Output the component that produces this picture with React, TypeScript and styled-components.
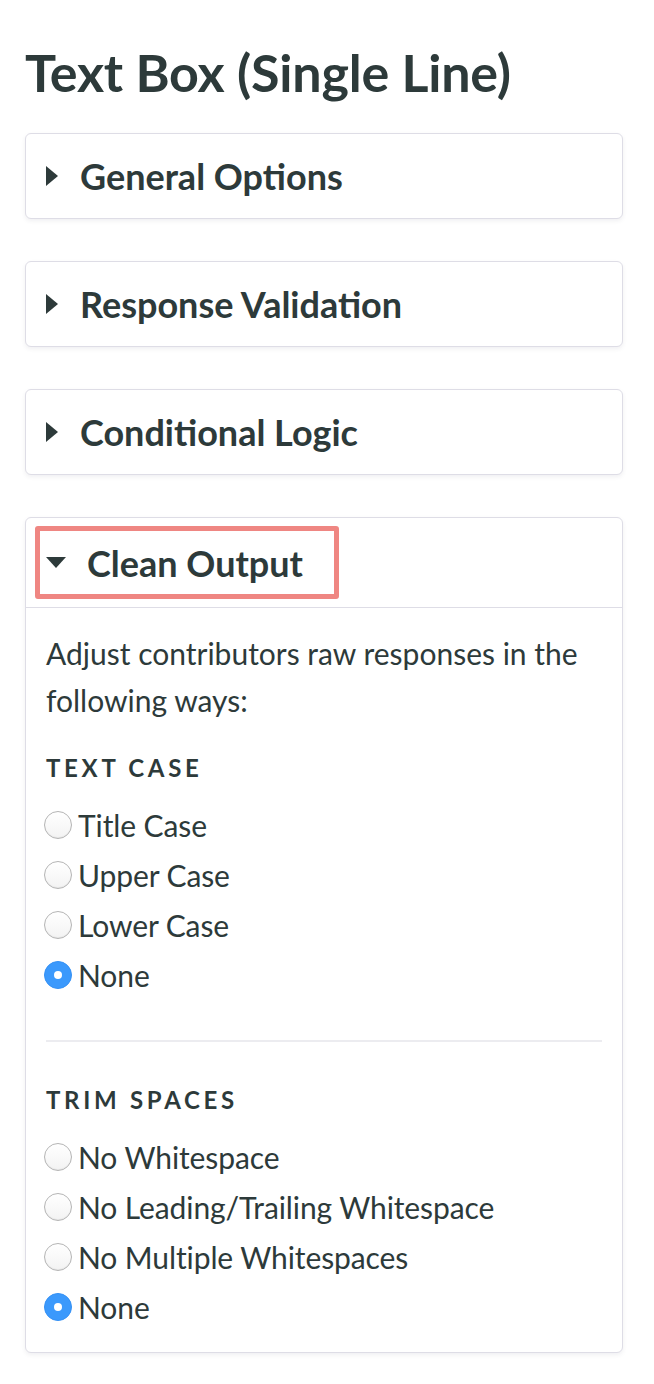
import styled, { createGlobalStyle } from 'styled-components';

const GlobalStyle = createGlobalStyle`
  html, body {
    margin: 0;
    padding: 0;
    background: #fff;
  }
  body {
    font-family: Lato, "Open Sans", sans-serif;
    color: #2d3a3a;
  }
`;

const Page = styled.div`
  padding: 32px 31px 30px 25px;
`;

const Title = styled.h1`
  margin: 0 0 21px 0;
  font-size: 52px;
  font-weight: 700;
  line-height: 80px;
  letter-spacing: -0.2px;
`;

const Stack = styled.div`
  display: flex;
  flex-direction: column;
  gap: 42px;
`;

const Card = styled.section`
  background: #fff;
  border: 1px solid #dedde6;
  border-radius: 6px;
  box-shadow: 0 2px 4px rgba(60, 60, 90, 0.08);
`;

const Header = styled.div<{ $open?: boolean }>`
  display: flex;
  align-items: center;
  box-sizing: content-box;
  height: ${(p) => (p.$open ? '73px' : '84px')};
  padding: ${(p) => (p.$open ? '8px 9px' : '0 10px')};
  border-bottom: ${(p) => (p.$open ? '1px solid #dedde6' : 'none')};
`;

const HeaderLabel = styled.div<{ $focus?: boolean }>`
  display: flex;
  align-items: center;
  gap: ${(p) => (p.$focus ? '21px' : '22px')};
  height: ${(p) => (p.$focus ? '73px' : '72px')};
  padding: 0 ${(p) => (p.$focus ? '31px' : '0')} 0 ${(p) => (p.$focus ? '6px' : '10px')};
  box-sizing: border-box;
  border: ${(p) => (p.$focus ? '5px solid #ef8682' : 'none')};
  border-radius: 3px;
  font-size: 36px;
  font-weight: 700;
`;

const Caret = styled.span<{ $open?: boolean }>`
  display: inline-block;
  width: 0;
  height: 0;
  ${(p) =>
    p.$open
      ? `border-left: 10px solid transparent;
         border-right: 10px solid transparent;
         border-top: 11px solid #2d3a3a;`
      : `border-top: 10px solid transparent;
         border-bottom: 10px solid transparent;
         border-left: 12px solid #2d3a3a;`}
`;

const Body = styled.div`
  padding: 22px 20px 20px 20px;
`;

const Intro = styled.p`
  margin: 0 0 29px 0;
  font-size: 30px;
  line-height: 47px;
`;

const GroupTitle = styled.div`
  font-size: 24px;
  font-weight: 700;
  letter-spacing: 3.7px;
  text-transform: uppercase;
  line-height: 30px;
  margin-bottom: 17px;
`;

const Options = styled.div`
  display: flex;
  flex-direction: column;
`;

const Option = styled.label`
  display: flex;
  align-items: center;
  gap: 6px;
  height: 50px;
  font-size: 30px;
  letter-spacing: -0.1px;
  cursor: pointer;
`;

const Radio = styled.span<{ $checked?: boolean }>`
  flex: none;
  width: 28px;
  height: 28px;
  box-sizing: border-box;
  border-radius: 50%;
  display: flex;
  align-items: center;
  justify-content: center;
  margin-left: -2px;
  ${(p) =>
    p.$checked
      ? `background: #3b99fc;
         border: 1px solid #3591f5;`
      : `background: linear-gradient(#ffffff, #f3f3f3);
         border: 1px solid #b5b5b5;
         box-shadow: inset 0 -1px 1px rgba(0, 0, 0, 0.05);`}

  &::after {
    content: '';
    width: 8px;
    height: 8px;
    border-radius: 50%;
    background: #fff;
    display: ${(p) => (p.$checked ? 'block' : 'none')};
  }
`;

const Divider = styled.hr`
  border: none;
  border-top: 2px solid #ececf0;
  margin: 40px 0 43px 0;
`;

const collapsed = ['General Options', 'Response Validation', 'Conditional Logic'];

const groups = [
  {
    title: 'Text Case',
    options: ['Title Case', 'Upper Case', 'Lower Case', 'None'],
  },
  {
    title: 'Trim Spaces',
    options: [
      'No Whitespace',
      'No Leading/Trailing Whitespace',
      'No Multiple Whitespaces',
      'None',
    ],
  },
];

export default function App() {
  return (
    <>
      <GlobalStyle />
      <Page>
        <Title>Text Box (Single Line)</Title>
        <Stack>
          {collapsed.map((name) => (
            <Card key={name}>
              <Header>
                <HeaderLabel>
                  <Caret />
                  {name}
                </HeaderLabel>
              </Header>
            </Card>
          ))}
          <Card>
            <Header $open>
              <HeaderLabel $focus>
                <Caret $open />
                Clean Output
              </HeaderLabel>
            </Header>
            <Body>
              <Intro>Adjust contributors raw responses in the following ways:</Intro>
              {groups.map((g, i) => (
                <div key={g.title}>
                  {i > 0 && <Divider />}
                  <GroupTitle>{g.title}</GroupTitle>
                  <Options>
                    {g.options.map((o) => (
                      <Option key={o}>
                        <Radio $checked={o === 'None'} />
                        {o}
                      </Option>
                    ))}
                  </Options>
                </div>
              ))}
            </Body>
          </Card>
        </Stack>
      </Page>
    </>
  );
}
